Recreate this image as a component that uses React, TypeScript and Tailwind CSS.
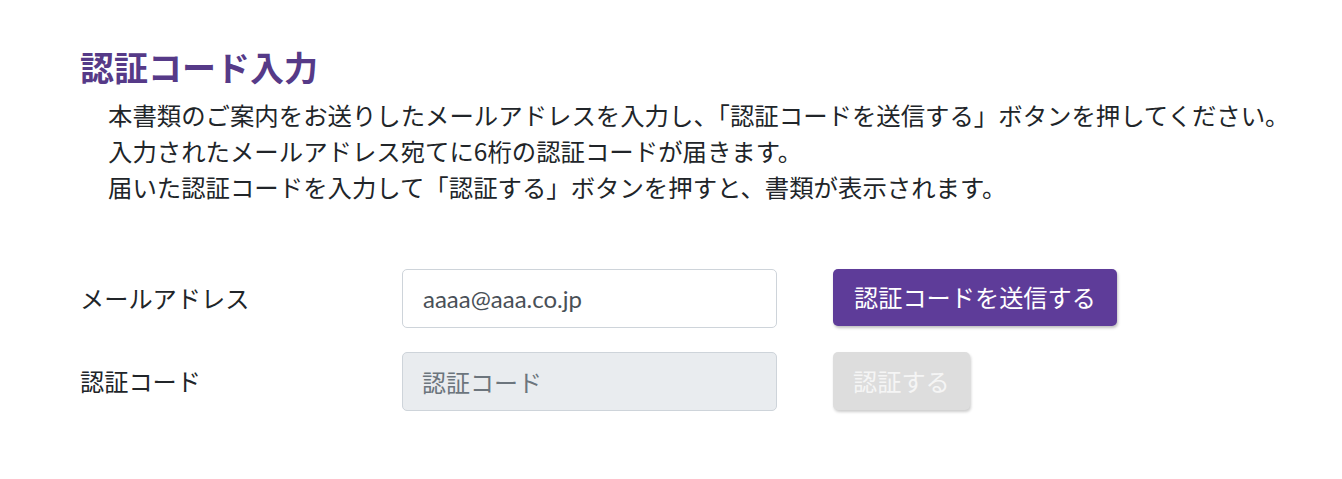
export default function App() {
  return (
    <div
      className="min-h-[479px] bg-white text-[#212529]"
      style={{ fontFamily: '"Noto Sans CJK JP", "Noto Sans", sans-serif' }}
    >
      <div className="pl-[80px] pt-[43px]">
        <h1 className="text-[34px] font-bold leading-[48px] text-[#563a88]">認証コード入力</h1>
        <div className="mt-[6px] pl-[28px] text-[24.4px] leading-[36px]">
          <p>本書類のご案内をお送りしたメールアドレスを入力し、「認証コードを送信する」ボタンを押してください。</p>
          <p>入力されたメールアドレス宛てに6桁の認証コードが届きます。</p>
          <p>届いた認証コードを入力して「認証する」ボタンを押すと、書類が表示されます。</p>
        </div>

        <div className="mt-[64px] flex flex-col gap-[24px]">
          <div className="flex items-center">
            <label className="w-[322px] text-[24.2px]">メールアドレス</label>
            <input
              type="text"
              defaultValue="aaaa@aaa.co.jp"
              className="h-[59px] w-[375px] rounded-[5px] border border-[#ced4da] bg-white px-[20px] font-['Lato','Noto_Sans_CJK_JP',sans-serif] text-[24px] text-[#495057] outline-none"
            />
            <button className="ml-[56px] h-[57px] self-start rounded-[5px] bg-[#5e3c99] px-[21px] text-[24.2px] text-white shadow-[1px_2px_3px_rgba(0,0,0,0.25)]">
              認証コードを送信する
            </button>
          </div>
          <div className="flex items-center">
            <label className="w-[322px] text-[24.2px]">認証コード</label>
            <input
              type="text"
              disabled
              placeholder="認証コード"
              className="h-[59px] w-[375px] rounded-[5px] border border-[#ced4da] bg-[#e9ecef] px-[19px] text-[24px] text-[#495057] outline-none placeholder:text-[#6c757d]"
            />
            <button
              disabled
              className="ml-[56px] h-[58px] self-start rounded-[5px] bg-[#dddddd] px-[20px] text-[24.2px] text-[#f5f5f5] shadow-[1px_2px_3px_rgba(0,0,0,0.2)]"
            >
              認証する
            </button>
          </div>
        </div>
      </div>
    </div>
  )
}
